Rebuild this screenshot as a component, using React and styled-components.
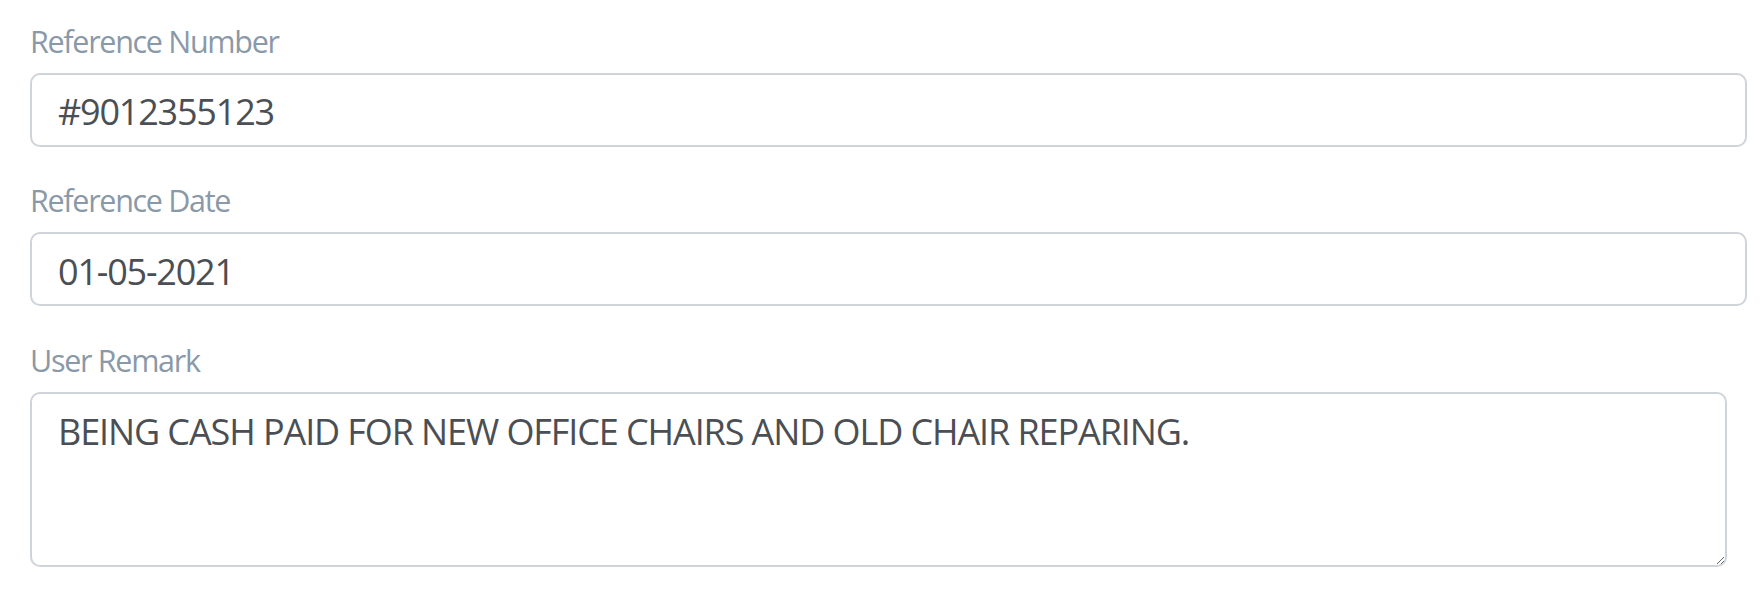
import styled, { createGlobalStyle } from "styled-components";

const GlobalStyle = createGlobalStyle`
    body {
        margin: 0;
        background: #fff;
        font-family: "Open Sans", "Noto Sans", sans-serif;
    }
`;

const fields = [
    { label: "Reference Number", value: "#9012355123" },
    { label: "Reference Date", value: "01-05-2021" },
];

export default function App() {
    return (
        <>
            <GlobalStyle />
            <Form>
                {fields.map((f) => (
                    <Group key={f.label}>
                        <Label>{f.label}</Label>
                        <Input defaultValue={f.value} />
                    </Group>
                ))}
                <Group>
                    <Label>User Remark</Label>
                    <TextArea
                        defaultValue="BEING CASH PAID FOR NEW OFFICE CHAIRS AND OLD CHAIR REPARING."
                    />
                </Group>
            </Form>
        </>
    );
}

const Form = styled.form`
    display: flex;
    flex-direction: column;
    gap: 30.5px;
    padding: 17.5px 17px 0 30px;
`;

const Group = styled.div`
    display: flex;
    flex-direction: column;
`;

const Label = styled.label`
    display: block;
    font-size: 30.5px;
    letter-spacing: -1.3px;
    line-height: 47px;
    color: #8a99a8;
    margin-bottom: 8px;
`;

const Input = styled.input`
    box-sizing: border-box;
    width: 100%;
    height: 74px;
    padding: 10px 26px 6px;
    border: 2px solid #ced4da;
    border-radius: 10px;
    font-family: "Open Sans", "Noto Sans", sans-serif;
    font-size: 36px;
    letter-spacing: -1.2px;
    line-height: 1.5;
    color: #4b4f54;
    background: #fff;
    outline: none;
`;

const TextArea = styled.textarea`
    box-sizing: border-box;
    width: 1697px;
    height: 175px;
    padding: 11px 26px 7px;
    border: 2px solid #ced4da;
    border-radius: 10px;
    font-family: "Open Sans", "Noto Sans", sans-serif;
    font-size: 36px;
    letter-spacing: -1.1px;
    line-height: 1.5;
    color: #4b4f54;
    background: #fff;
    outline: none;
    resize: vertical;
`;
